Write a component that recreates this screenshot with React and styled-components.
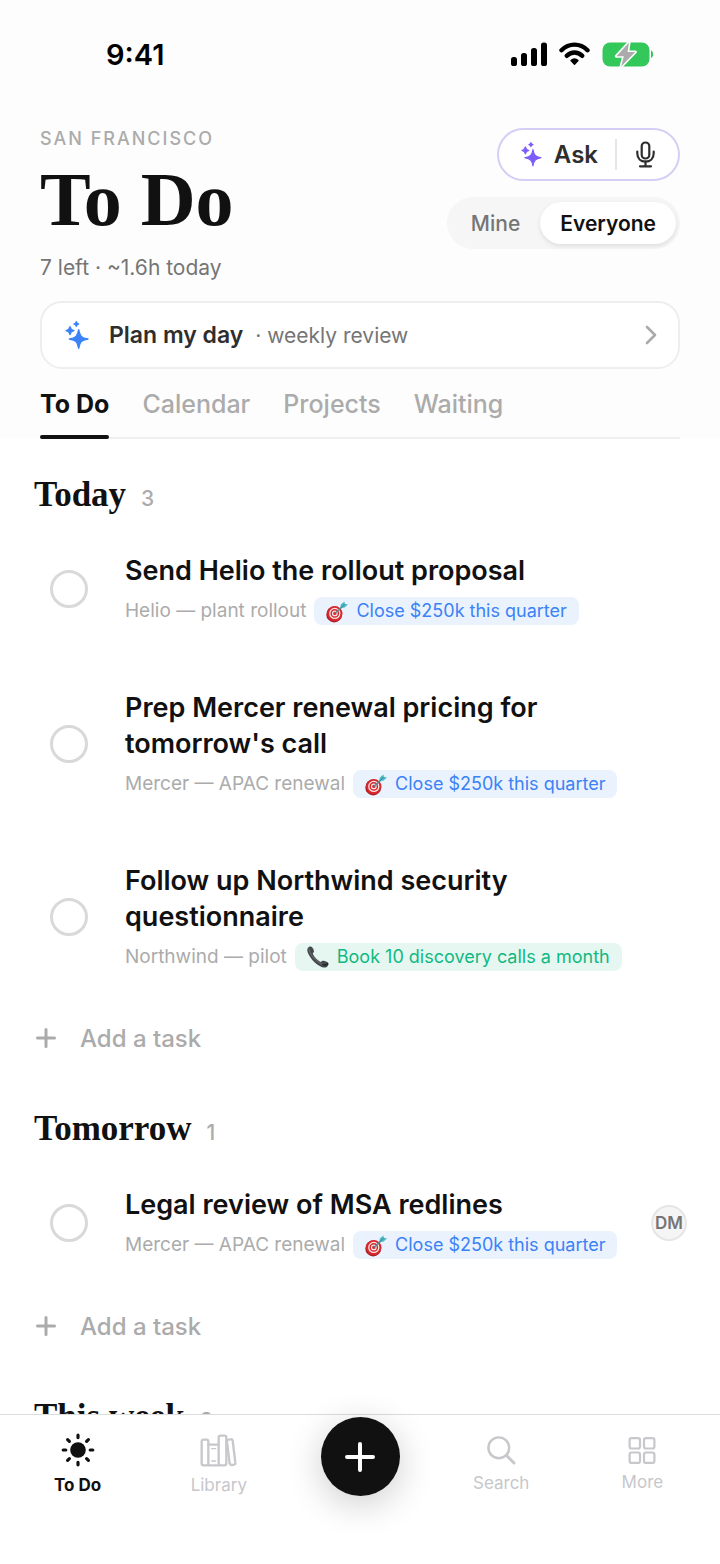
import React, { useState } from 'react'
import styled, { createGlobalStyle, css } from 'styled-components'

const sans = `Inter, 'Liberation Sans', sans-serif`
const serif = `'Liberation Serif', serif`

const GlobalStyle = createGlobalStyle`
  * {
    box-sizing: border-box;
  }

  body {
    margin: 0;
    background: #fff;
    color: #111;
    font-family: ${sans};
  }

  button {
    appearance: none;
    margin: 0;
    padding: 0;
    border: 0;
    background: none;
    color: inherit;
    font-family: inherit;
    cursor: pointer;
  }

  svg {
    display: block;
    flex: none;
  }
`

const Screen = styled.div`
  display: flex;
  flex-direction: column;
  height: 100vh;
`

const Header = styled.header`
  flex: none;
  padding: 0 40px;
  background: #fdfdfd;
`

const StatusBar = styled.div`
  display: flex;
  align-items: center;
  justify-content: space-between;
  height: 108px;
  padding: 0 26px 0 66px;
  color: #000;
  font-size: 29px;
  font-weight: 600;
`

const StatusIcons = styled.div`
  display: flex;
  align-items: center;
  gap: 12px;
`

const HeadRow = styled.div`
  display: flex;
  justify-content: space-between;
  padding-top: 20px;
`

const Place = styled.div`
  color: #ababab;
  font-size: 18px;
  font-weight: 500;
  line-height: 22px;
  letter-spacing: 2px;
  text-transform: uppercase;
`

const PageTitle = styled.h1`
  margin: 7px 0 13px;
  font-family: ${serif};
  font-size: 76px;
  font-weight: 700;
  line-height: 84px;
`

const Summary = styled.div`
  color: #757575;
  font-size: 21px;
  line-height: 28px;
`

const Controls = styled.div`
  display: flex;
  flex-direction: column;
  align-items: flex-end;
  gap: 16px;
`

const AskPill = styled.div`
  display: flex;
  align-items: center;
  height: 53px;
  border: 2px solid #d6cef5;
  border-radius: 27px;
  background: #fff;
  color: #2e2e2e;
`

const AskButton = styled.button`
  display: flex;
  align-items: center;
  gap: 12px;
  padding: 0 17px 0 22px;
  font-size: 24px;
  font-weight: 600;
  line-height: 30px;
`

const MicButton = styled.button`
  padding: 2px 23px 2px 19px;
  border-left: 2px solid #e6e6e6;
`

const Segmented = styled.div`
  display: flex;
  padding: 5px 4px;
  border-radius: 26px;
  background: #f6f6f6;
`

const Segment = styled.button`
  height: 42px;
  padding: 0 20px;
  border-radius: 21px;
  color: #757575;
  font-size: 21px;
  font-weight: 500;

  ${props => props.$active && css`
    background: #fff;
    color: #111;
    font-weight: 600;
    box-shadow: 0 2px 5px rgba(0, 0, 0, 0.1);
  `}
`

const PlanCard = styled.button`
  display: flex;
  align-items: center;
  width: 100%;
  height: 68px;
  margin-top: 19px;
  padding: 0 21px 0 23px;
  border: 2px solid #eee;
  border-radius: 22px;
  background: #fff;
  text-align: left;
`

const PlanTitle = styled.span`
  margin-left: 20px;
  color: #2e2e2e;
  font-size: 23px;
  font-weight: 600;
`

const PlanNote = styled.span`
  flex: 1;
  margin-left: 12px;
  color: #757575;
  font-size: 21px;
`

const Tabs = styled.nav`
  display: flex;
  gap: 33px;
  height: 70px;
  border-bottom: 2px solid #efefef;
`

const Tab = styled.button`
  display: flex;
  flex-direction: column;
  margin-bottom: -2px;
  padding-top: 4px;
  color: #ababab;
  font-size: 25px;
  font-weight: 500;
  line-height: 62px;

  ${props => props.$active && css`
    color: #111;
    font-weight: 700;

    &::after {
      content: '';
      width: 100%;
      height: 4px;
      border-radius: 2px;
      background: #111;
    }
  `}
`

const List = styled.main`
  flex: 1;
  min-height: 0;
  overflow: hidden;
`

const Section = styled.section`
  padding: 36px 33px 0 34px;
`

const SectionHead = styled.div`
  display: flex;
  align-items: baseline;
  gap: 15px;
  margin-bottom: 5px;
`

const SectionTitle = styled.h2`
  margin: 0;
  font-family: ${serif};
  font-size: 35px;
  font-weight: 700;
  line-height: 40px;
`

const Count = styled.span`
  color: #ababab;
  font-size: 21px;
  font-weight: 500;
`

const Task = styled.div`
  display: flex;
  align-items: center;
  padding: 33px 0 32px 16px;
`

const Check = styled.input`
  appearance: none;
  flex: none;
  width: 38px;
  height: 38px;
  margin: 0 37px 0 0;
  border: 3px solid #d9d9d9;
  border-radius: 50%;
  cursor: pointer;

  &:checked {
    border-color: #111;
    background: #111;
  }
`

const TaskBody = styled.div`
  flex: 1;
  min-width: 0;
`

const TaskTitle = styled.label`
  display: block;
  max-width: 460px;
  font-size: 27px;
  font-weight: 600;
  line-height: 36px;
`

const Meta = styled.div`
  display: flex;
  align-items: center;
  gap: 8px;
  margin-top: 8px;
  color: #ababab;
  font-size: 19px;
  line-height: 28px;
  white-space: nowrap;
`

const chipColors = {
  deal: { text: '#3b82f6', fill: '#eaf2fe' },
  calls: { text: '#10b981', fill: '#e6f7f1' },
}

const Chip = styled.span`
  display: flex;
  align-items: center;
  gap: 8px;
  padding: 0 12px;
  border-radius: 8px;
  background: ${props => chipColors[props.$kind].fill};
  color: ${props => chipColors[props.$kind].text};
  font-size: 18px;
`

const Avatar = styled.span`
  flex: none;
  width: 36px;
  border: 2px solid #e6e6e6;
  border-radius: 50%;
  background: #f5f5f5;
  color: #757575;
  font-size: 17px;
  font-weight: 600;
  line-height: 32px;
  display: flex;
  justify-content: center;
`

const AddButton = styled.button`
  display: flex;
  align-items: center;
  gap: 24px;
  height: 70px;
  padding-left: 2px;
  color: #ababab;
  font-size: 24px;
  font-weight: 500;
`

const BottomBar = styled.nav`
  flex: none;
  display: flex;
  padding: 0 7px 51px;
  border-top: 1px solid #dcdcdc;
  background: #fff;
`

const BarItem = styled.button`
  display: flex;
  flex: 1;
  flex-direction: column;
  align-items: center;
  justify-content: center;
  gap: 8px;
  height: 98px;
  color: ${props => props.$active ? '#111' : '#c7c7cc'};
  font-size: 17px;
  font-weight: ${props => props.$active ? 700 : 400};
  line-height: 20px;
`

const AddSlot = styled.div`
  display: flex;
  flex: 1;
  justify-content: center;
`

const Fab = styled.button`
  display: flex;
  align-items: center;
  justify-content: center;
  width: 79px;
  height: 79px;
  margin-top: 2px;
  border-radius: 50%;
  background: #111;
  color: #fff;
  box-shadow: 0 8px 36px rgba(0, 0, 0, 0.2);
`

const SignalIcon = () => (
  <svg width="36" height="24" viewBox="0 0 36 24" fill="currentColor">
    <rect x="0" y="15" width="6" height="9" rx="2.6" />
    <rect x="10" y="11" width="6" height="13" rx="2.6" />
    <rect x="20" y="6" width="6" height="18" rx="2.6" />
    <rect x="30" y="0.5" width="6" height="23.5" rx="2.6" />
  </svg>
)

const WifiIcon = () => (
  <svg width="31" height="24" viewBox="0 0 31 24" fill="none" stroke="currentColor" strokeWidth="4.4" strokeLinecap="round">
    <path d="M2.5 8.2C9.9 0.8 21.1 0.8 28.5 8.2" />
    <path d="M7.7 13.8C12.3 9.4 18.7 9.4 23.3 13.8" />
    <path d="M12 18.6C14.2 16.4 16.8 16.4 19 18.6L15.5 22.2Z" fill="currentColor" strokeWidth="1.4" strokeLinejoin="round" />
  </svg>
)

const BatteryIcon = () => (
  <svg width="52" height="28" viewBox="0 0 52 28">
    <rect x="0.5" y="2.5" width="47" height="24" rx="7.5" fill="#34c759" />
    <path d="M49 10.5C51.8 11.5 51.8 17 49 18Z" fill="#34c759" />
    <path
      d="M27 2.5L14.5 16.2H21.8L19.2 26.5L33.2 12H25.6Z"
      fill="#ababab"
      stroke="#fff"
      strokeWidth="3.2"
      strokeLinejoin="round"
      paintOrder="stroke"
    />
  </svg>
)

const star = (x, y, r) => {
  const k = r * 0.2
  return `M${x} ${y - r}C${x + k * 0.6} ${y - k * 1.5} ${x + k * 1.5} ${y - k * 0.6} ${x + r} ${y}` +
    `C${x + k * 1.5} ${y + k * 0.6} ${x + k * 0.6} ${y + k * 1.5} ${x} ${y + r}` +
    `C${x - k * 0.6} ${y + k * 1.5} ${x - k * 1.5} ${y + k * 0.6} ${x - r} ${y}` +
    `C${x - k * 1.5} ${y - k * 0.6} ${x - k * 0.6} ${y - k * 1.5} ${x} ${y - r}Z`
}

const SparkleIcon = ({ size, color }) => (
  <svg width={size} height={size * 7 / 6} viewBox="0 0 72 84" fill={color} stroke={color} strokeWidth="4" strokeLinejoin="round">
    <path d={star(41, 54, 28)} />
    <path d={star(15, 29, 12)} />
    <path d={star(34, 9, 7)} />
  </svg>
)

const MicIcon = () => (
  <svg width="19" height="27" viewBox="0 0 19 27" fill="none" stroke="currentColor" strokeWidth="2.2" strokeLinecap="round">
    <rect x="5.7" y="1.5" width="7.6" height="16" rx="3.8" />
    <path d="M1.3 10.5V12.3C1.3 17.5 4.8 20.6 9.5 20.6S17.7 17.5 17.7 12.3V10.5" />
    <path d="M9.5 20.6V25M4 25.3H15" />
  </svg>
)

const ChevronIcon = () => (
  <svg width="12" height="20" viewBox="0 0 12 20" fill="none" stroke="#ababab" strokeWidth="2.6" strokeLinecap="round" strokeLinejoin="round">
    <path d="M2 2L10 10L2 18" />
  </svg>
)

const PlusIcon = ({ size, stroke }) => (
  <svg width={size} height={size} viewBox={`0 0 ${size} ${size}`} stroke="currentColor" strokeWidth={stroke} strokeLinecap="round">
    <path d={`M${size / 2} ${stroke / 2}V${size - stroke / 2}M${stroke / 2} ${size / 2}H${size - stroke / 2}`} />
  </svg>
)

const TargetIcon = () => (
  <svg width="22" height="24" viewBox="0 0 22 24">
    <ellipse cx="8.2" cy="15.4" rx="7.9" ry="8" fill="#a91d22" />
    <ellipse cx="8.8" cy="14.6" rx="7.7" ry="7.7" fill="#d8282f" />
    <circle cx="8.8" cy="14.4" r="5" fill="none" stroke="#f6e6e4" strokeWidth="1.3" />
    <circle cx="8.8" cy="14.4" r="2.3" fill="none" stroke="#f6e6e4" strokeWidth="1.2" />
    <path d="M9 14.2L16 8" stroke="#4f8d96" strokeWidth="1.4" />
    <path d="M14.2 9.4L14.8 5.6L18.4 2.4L18.8 4.8L22 5.4L18.6 8.6Z" fill="#4fb9c4" />
    <path d="M14.6 9.2L18.8 4.9" stroke="#2c7c88" strokeWidth="0.8" />
  </svg>
)

const PhoneIcon = () => (
  <svg width="22" height="22" viewBox="0 0 22 22">
    <path
      d="M0.6 2.4C1.5 0.8 3.5 0.2 4.6 0.9C6.2 2 7.3 4.4 6.9 5.8C6.6 6.9 5.5 7 5.9 8.1C7.2 11 10.4 14.3 13.2 15.8C14.2 16.3 14.6 15 15.6 14.8C17.4 14.4 20.4 15.8 21.3 17.2C22.1 18.6 20.6 21 18.8 21.5C15 22.4 8.4 18 4.6 13C1.6 9.2 -0.6 5 0.6 2.4Z"
      fill="#46494c"
    />
    <path d="M2.2 3.2C2.6 7.8 8.6 15.6 16.2 18.8" fill="none" stroke="#65696c" strokeWidth="1.2" strokeLinecap="round" />
    <path d="M16 18.6C17.8 19.4 19.8 18.6 20.6 17.4" fill="none" stroke="#222" strokeWidth="1.4" strokeLinecap="round" />
  </svg>
)

const SunIcon = () => (
  <svg width="34" height="34" viewBox="0 0 34 34" stroke="currentColor" strokeWidth="3.2" strokeLinecap="round">
    <circle cx="17" cy="17" r="7.8" fill="currentColor" stroke="none" />
    <path d="M17 2.2V4.6M17 29.4V31.8M2.2 17H4.8M29.2 17H31.8M6.6 6.6L8.4 8.4M25.6 25.6L27.4 27.4M27.4 6.6L25.6 8.4M8.4 25.6L6.6 27.4" />
  </svg>
)

const LibraryIcon = () => (
  <svg width="37" height="33" viewBox="0 0 111 99" fill="none" stroke="currentColor" strokeWidth="7" strokeLinejoin="round" strokeLinecap="round">
    <rect x="5" y="17" width="20" height="77" rx="6" />
    <path d="M25 32H56M25 94H56" />
    <path d="M35 44H47M35 81H47" strokeWidth="4" />
    <rect x="56" y="5" width="23" height="89" rx="6" />
    <path d="M81 24Q80 18 85 17L92 16Q97 15 98 20L106 86Q107 91 102 92L95 93Q90 93 89 88Z" />
  </svg>
)

const SearchIcon = () => (
  <svg width="29" height="29" viewBox="0 0 29 29" fill="none" stroke="currentColor" strokeLinecap="round">
    <circle cx="11.8" cy="11.8" r="10.4" strokeWidth="2.4" />
    <path d="M19.8 19.8L27 27" strokeWidth="3" />
  </svg>
)

const GridIcon = () => (
  <svg width="28" height="27" viewBox="0 0 28 27" fill="none" stroke="currentColor" strokeWidth="2.2">
    <rect x="1.6" y="1.1" width="10.4" height="10.4" rx="2" />
    <rect x="16" y="1.1" width="10.4" height="10.4" rx="2" />
    <rect x="1.6" y="15.5" width="10.4" height="10.4" rx="2" />
    <rect x="16" y="15.5" width="10.4" height="10.4" rx="2" />
  </svg>
)

const goals = {
  deal: { label: 'Close $250k this quarter', Icon: TargetIcon },
  calls: { label: 'Book 10 discovery calls a month', Icon: PhoneIcon },
}

const sections = [
  {
    title: 'Today',
    count: 3,
    tasks: [
      { id: 'helio', title: 'Send Helio the rollout proposal', project: 'Helio — plant rollout', goal: 'deal' },
      { id: 'mercer', title: "Prep Mercer renewal pricing for tomorrow's call", project: 'Mercer — APAC renewal', goal: 'deal' },
      { id: 'northwind', title: 'Follow up Northwind security questionnaire', project: 'Northwind — pilot', goal: 'calls' },
    ],
  },
  {
    title: 'Tomorrow',
    count: 1,
    tasks: [
      { id: 'msa', title: 'Legal review of MSA redlines', project: 'Mercer — APAC renewal', goal: 'deal', owner: 'DM' },
    ],
  },
  { title: 'This week', count: 3, tasks: [] },
]

const TaskRow = ({ task }) => {
  const { label, Icon } = goals[task.goal]
  return (
    <Task>
      <Check type="checkbox" id={task.id} />
      <TaskBody>
        <TaskTitle htmlFor={task.id}>{task.title}</TaskTitle>
        <Meta>
          <span>{task.project}</span>
          <Chip $kind={task.goal}><Icon />{label}</Chip>
        </Meta>
      </TaskBody>
      {task.owner && <Avatar>{task.owner}</Avatar>}
    </Task>
  )
}

const App = () => {
  const [tab, setTab] = useState('To Do')
  const [scope, setScope] = useState('Everyone')

  return (
    <Screen>
      <GlobalStyle />
      <Header>
        <StatusBar>
          <span>9:41</span>
          <StatusIcons>
            <SignalIcon />
            <WifiIcon />
            <BatteryIcon />
          </StatusIcons>
        </StatusBar>
        <HeadRow>
          <div>
            <Place>San Francisco</Place>
            <PageTitle>To Do</PageTitle>
            <Summary>7 left · ~1.6h today</Summary>
          </div>
          <Controls>
            <AskPill>
              <AskButton><SparkleIcon size={21} color="#7c5cfc" />Ask</AskButton>
              <MicButton aria-label="Dictate"><MicIcon /></MicButton>
            </AskPill>
            <Segmented>
              {['Mine', 'Everyone'].map(name => (
                <Segment key={name} $active={scope === name} onClick={() => setScope(name)}>{name}</Segment>
              ))}
            </Segmented>
          </Controls>
        </HeadRow>
        <PlanCard>
          <SparkleIcon size={24} color="#3b82f6" />
          <PlanTitle>Plan my day</PlanTitle>
          <PlanNote>· weekly review</PlanNote>
          <ChevronIcon />
        </PlanCard>
        <Tabs>
          {['To Do', 'Calendar', 'Projects', 'Waiting'].map(name => (
            <Tab key={name} $active={tab === name} onClick={() => setTab(name)}>{name}</Tab>
          ))}
        </Tabs>
      </Header>
      <List>
        {sections.map(section => (
          <Section key={section.title}>
            <SectionHead>
              <SectionTitle>{section.title}</SectionTitle>
              <Count>{section.count}</Count>
            </SectionHead>
            {section.tasks.map(task => <TaskRow key={task.id} task={task} />)}
            {section.tasks.length > 0 && (
              <AddButton><PlusIcon size={20} stroke={3} />Add a task</AddButton>
            )}
          </Section>
        ))}
      </List>
      <BottomBar>
        <BarItem $active><SunIcon />To Do</BarItem>
        <BarItem><LibraryIcon />Library</BarItem>
        <AddSlot>
          <Fab aria-label="New task"><PlusIcon size={30} stroke={4} /></Fab>
        </AddSlot>
        <BarItem><SearchIcon />Search</BarItem>
        <BarItem><GridIcon />More</BarItem>
      </BottomBar>
    </Screen>
  )
}

export default App
